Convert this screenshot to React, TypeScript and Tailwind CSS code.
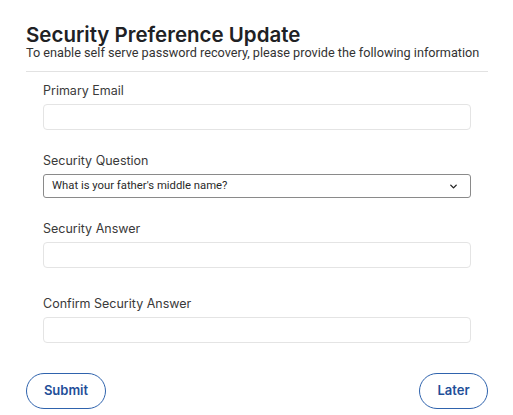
import { ChevronDown } from "lucide-react";

const labelCls = "block text-[12.5px] leading-[18px] text-[#3a3a3a] font-['Inter',sans-serif]";
const inputCls = "block w-full h-[26px] rounded-[4px] border border-[#e4e4e4] bg-white";

export default function App() {
  return (
    <div className="w-[513px] h-[415px] bg-white pl-[26px] pr-[25px] pt-[23px]">
      <h1 className="text-[20.5px] leading-[23px] font-semibold text-[#202124] font-['Inter',sans-serif]">
        Security Preference Update
      </h1>
      <p className="text-[12.7px] leading-[14px] whitespace-nowrap text-[#333] font-['Roboto',sans-serif]">
        To enable self serve password recovery, please provide the following information
      </p>
      <hr className="mt-[11px] border-0 border-t border-[#e2e2e2]" />

      <div className="px-[17px]">
        <div className="mt-[10px]">
          <label className={labelCls}>Primary Email</label>
          <input className={`${inputCls} mt-[4px]`} />
        </div>

        <div className="mt-[22px]">
          <label className={labelCls}>Security Question</label>
          <div className="mt-[4px] h-[24px] rounded-[3px] border border-[#8a8a8a] flex items-center justify-between pl-[8px] pr-[11px]">
            <span className="text-[11.3px] text-[#2a2a2a] font-['Roboto',sans-serif]">
              What is your father's middle name?
            </span>
            <ChevronDown size={11} strokeWidth={3} className="text-[#222]" />
          </div>
        </div>

        <div className="mt-[22px]">
          <label className={labelCls}>Security Answer</label>
          <input className={`${inputCls} mt-[4px]`} />
        </div>

        <div className="mt-[27px]">
          <label className={labelCls}>Confirm Security Answer</label>
          <input className={`${inputCls} mt-[4px]`} />
        </div>
      </div>

      <div className="mt-[30px] flex justify-between">
        <button className="w-[80px] h-[36px] rounded-full border border-[#2f63ad] text-[#1f4f99] text-[13px] font-semibold font-['Inter',sans-serif]">
          Submit
        </button>
        <button className="w-[69px] h-[36px] rounded-full border border-[#2f63ad] text-[#1f4f99] text-[13px] font-semibold font-['Inter',sans-serif]">
          Later
        </button>
      </div>
    </div>
  );
}
